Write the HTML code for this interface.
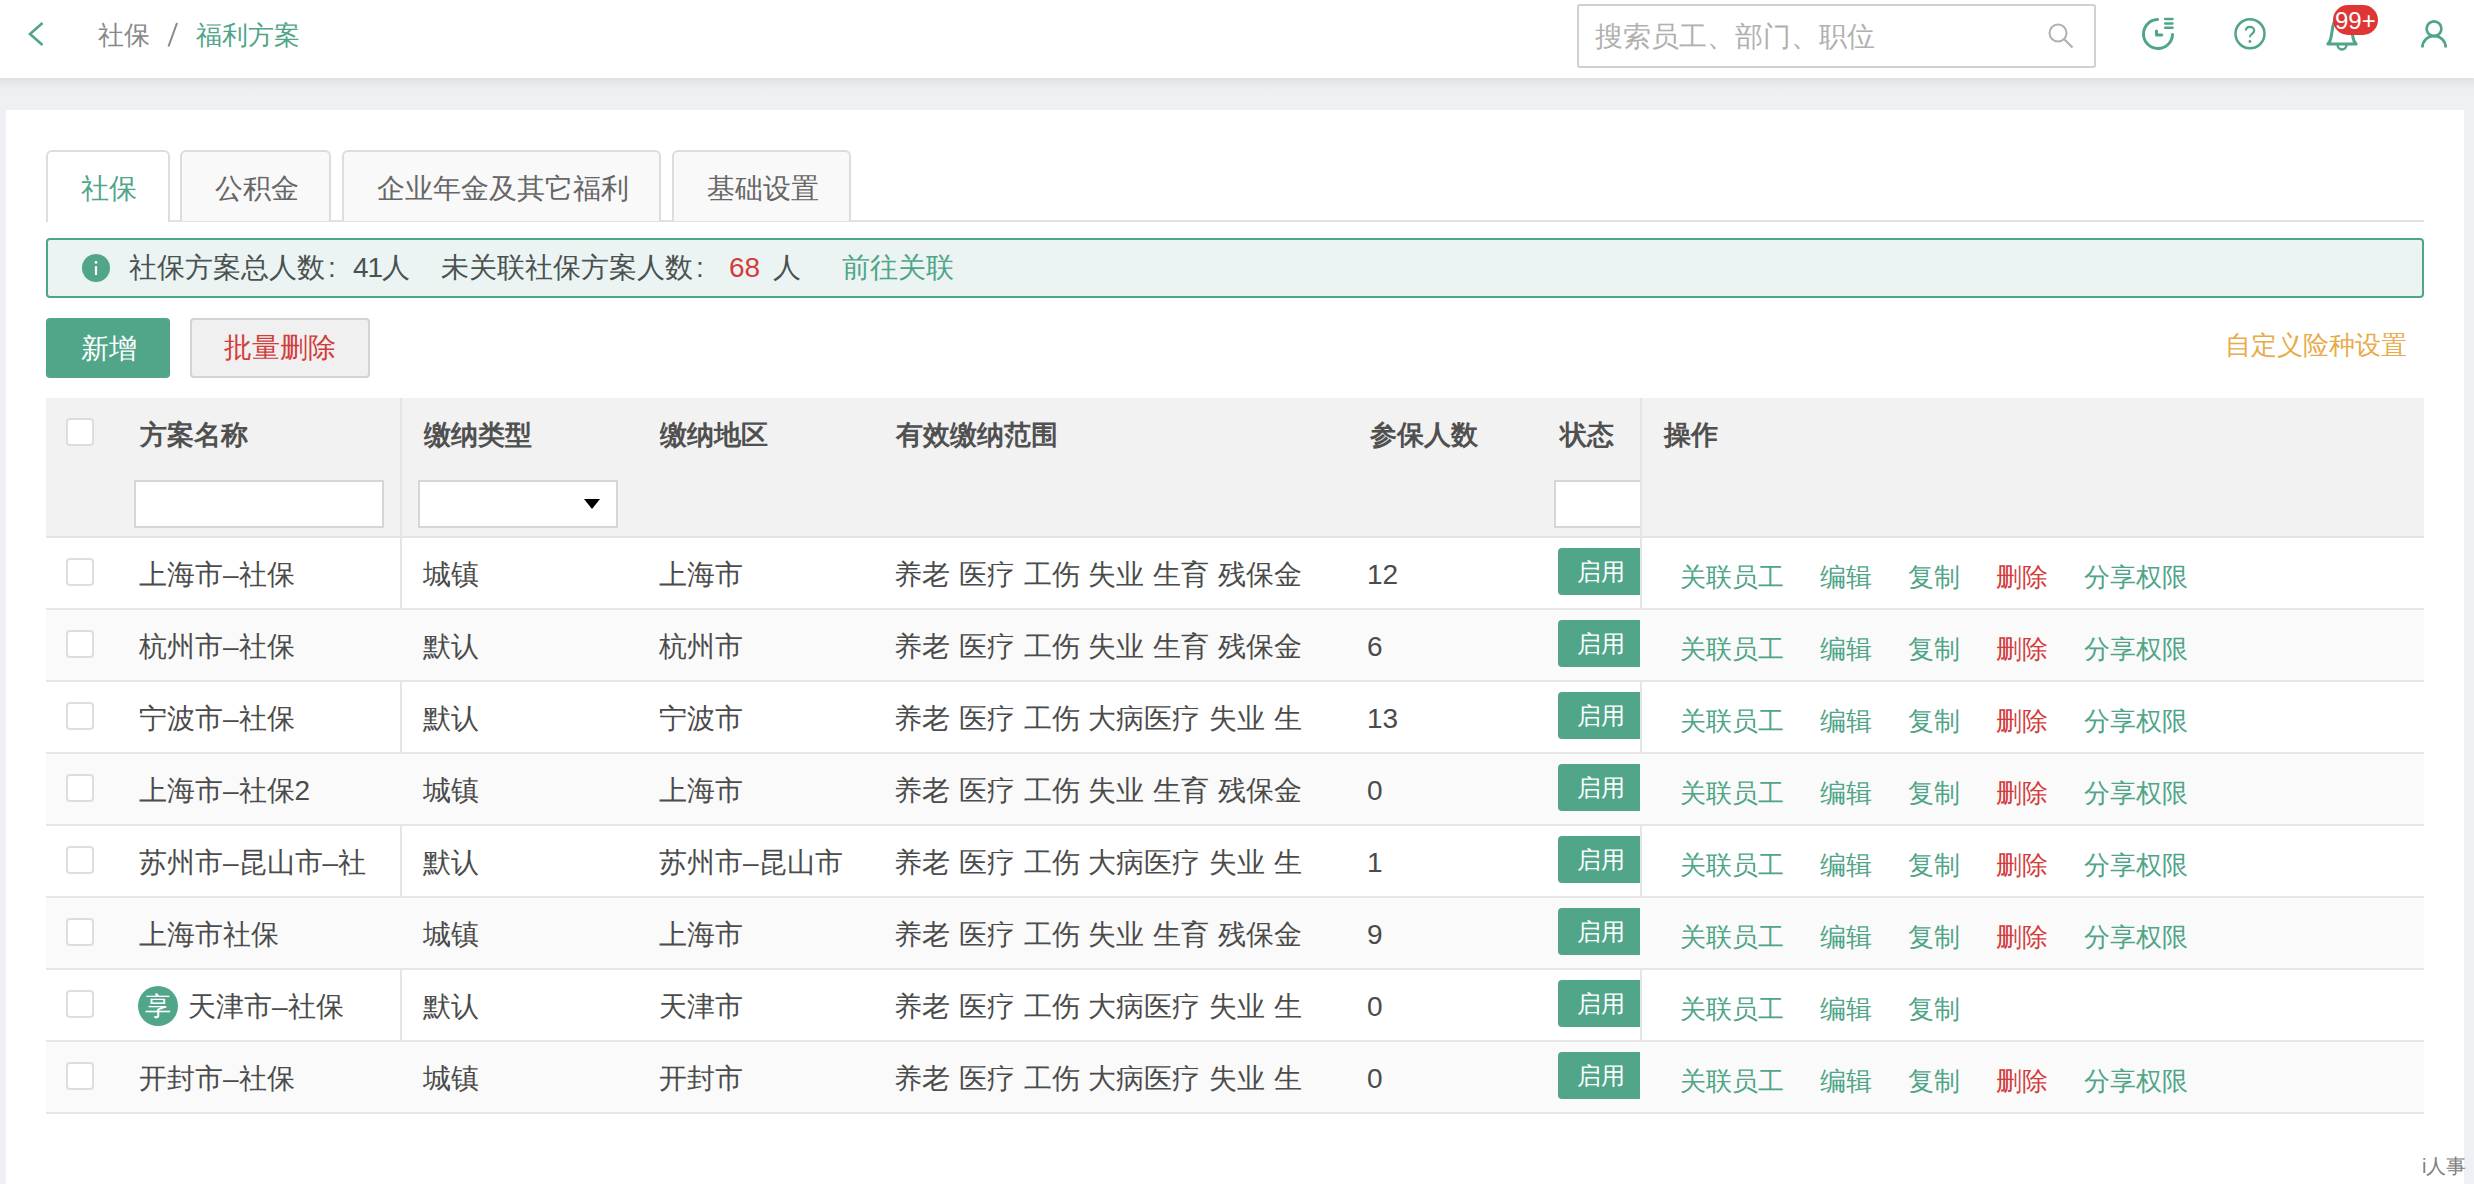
<!DOCTYPE html>
<html><head><meta charset="utf-8">
<style>
*{box-sizing:border-box;margin:0;padding:0}
html,body{width:2474px;height:1184px;overflow:hidden;background:#eff0f4;font-family:"Liberation Sans",sans-serif;color:#555}
.abs{position:absolute}
.t{position:absolute;white-space:nowrap;line-height:1}
#hdr{position:absolute;left:0;top:0;width:2474px;height:78px;background:#fff}
#shadow{position:absolute;left:0;top:78px;width:2474px;height:12px;background:linear-gradient(#e0e1e5,#eff0f4)}
#card{position:absolute;left:6px;top:110px;width:2458px;height:1074px;background:#fff}
.tab{position:absolute;top:150px;height:71px;border:2px solid #ddd;border-bottom:none;border-radius:6px 6px 0 0;background:#f9f9f9;color:#666;font-size:28px}
.tab.on{background:#fff;color:#4fa588;height:72px}
.cb{position:absolute;left:66px;width:28px;height:28px;border:2px solid #ddd;border-radius:4px;background:#fff}
.row{position:absolute;left:46px;width:2378px;height:72px;border-bottom:2px solid #e6e6e6}
.row.alt{background:#fafafa}
.badge{position:absolute;left:1558px;width:82px;height:47px;background:#51a68a;border-radius:4px 0 0 4px;color:#fff;font-size:24px}
.g{color:#4fa588}.r{color:#d33c3c}
.tx{font-size:28px;color:#4b4b4b}
.col{display:inline-block;width:28px;padding-left:3px}
.op{position:absolute;font-size:26px;line-height:1;white-space:nowrap}
</style></head><body>
<div id="hdr">
  <svg class="abs" style="left:20px;top:14px" width="40" height="40" viewBox="0 0 40 40"><path d="M22.5 9 L10 20 L22.5 31" fill="none" stroke="#4fa588" stroke-width="2.6" stroke-linejoin="miter"/></svg>
  <div class="t" style="left:98px;top:22px;font-size:26px;color:#888">社保</div>
  <svg class="abs" style="left:160px;top:18px" width="24" height="34" viewBox="0 0 24 34"><path d="M17 5 L8.5 28.5" stroke="#888" stroke-width="2"/></svg>
  <div class="t" style="left:196px;top:22px;font-size:26px;color:#4fa588">福利方案</div>
  <div class="abs" style="left:1577px;top:4px;width:519px;height:64px;border:2px solid #d0d0d0;border-radius:3px;background:#fff"></div>
  <div class="t" style="left:1595px;top:23px;font-size:28px;color:#b0b0b0">搜索员工、部门、职位</div>
  <svg class="abs" style="left:2040px;top:16px" width="40" height="40" viewBox="0 0 40 40"><circle cx="18" cy="17" r="8.5" fill="none" stroke="#b0b0b0" stroke-width="2"/><path d="M24 23 L32.5 31.5" stroke="#b0b0b0" stroke-width="2.2"/></svg>
  <svg class="abs" style="left:2135px;top:10px" width="50" height="50" viewBox="0 0 50 50" fill="none" stroke="#4fa588" stroke-linecap="round" stroke-linejoin="round"><path d="M22.5 9.5 A14.5 14.5 0 1 0 37.5 24.5" stroke-width="3"/><path d="M30.2 9.1 H37.5 M30.2 13.4 H37.5 M30.2 17.7 H37.5" stroke-width="2.5"/><path d="M21.5 21.1 V25.1 H26.8" stroke-width="3"/></svg>
  <svg class="abs" style="left:2225px;top:10px" width="50" height="50" viewBox="0 0 50 50" fill="none" stroke="#4fa588"><circle cx="25" cy="23.75" r="14.5" stroke-width="2.5"/><path d="M20.9 20.5 C20.9 18 22.7 16.9 25 16.9 C27.4 16.9 29.2 18.5 29.2 20.6 C29.2 22.6 27.6 23.5 26.3 24.5 C25.3 25.3 24.9 26 24.9 27.3" stroke-width="2.2"/><circle cx="24.9" cy="31.5" r="1.4" fill="#4fa588" stroke="none"/></svg>
  <svg class="abs" style="left:2315px;top:0px" width="70" height="60" viewBox="0 0 70 60" fill="none" stroke="#4fa588" stroke-width="3" stroke-linejoin="round"><path d="M12.8 44 C15 42 15.8 39.5 16.2 36.5 L17.8 26.5 C18.5 21.5 22 18.5 27 18.5 C32 18.5 35.5 21.5 36.2 26.5 L37.8 36.5 C38.2 39.5 39 42 41.2 44 Z"/><path d="M22.6 45 A4.4 4.4 0 0 0 31.4 45" stroke-width="2.5"/></svg>
  <div class="abs" style="left:2333px;top:5px;width:45px;height:30px;border-radius:15px;background:#e03535"></div>
  <div class="t" style="left:2335px;top:9px;font-size:24px;color:#fff">99+</div>
  <svg class="abs" style="left:2410px;top:10px" width="50" height="50" viewBox="0 0 50 50" fill="none" stroke="#4fa588" stroke-width="2.7"><circle cx="24" cy="18.8" r="7.4"/><path d="M12.35 37.6 A11.7 11.7 0 0 1 35.75 37.6"/></svg>
</div>
<div id="shadow"></div>
<div id="card"></div>

<!-- tabs -->
<div class="abs" style="left:46px;top:220px;width:2378px;height:2px;background:#e2e2e2"></div>
<div class="tab on" style="left:46px;width:124px"><div class="t" style="left:33px;top:23px">社保</div></div>
<div class="tab" style="left:180px;width:151px"><div class="t" style="left:33px;top:23px">公积金</div></div>
<div class="tab" style="left:342px;width:319px"><div class="t" style="left:33px;top:23px">企业年金及其它福利</div></div>
<div class="tab" style="left:672px;width:179px"><div class="t" style="left:33px;top:23px">基础设置</div></div>

<!-- info bar -->
<div class="abs" style="left:46px;top:238px;width:2378px;height:60px;border:2px solid #4fa588;border-radius:4px;background:#ebf4f2"></div>
<svg class="abs" style="left:82px;top:254px" width="28" height="28" viewBox="0 0 28 28"><circle cx="14" cy="14" r="14" fill="#51a68a"/><circle cx="14" cy="8.4" r="1.4" fill="#fff"/><rect x="12.9" y="12.2" width="2.2" height="8.8" fill="#fff"/></svg>
<div class="t" style="left:129px;top:254px;font-size:28px;color:#4a5151">社保方案总人数<span class="col">:</span><span style="letter-spacing:-1px">41</span>人</div>
<div class="t" style="left:441px;top:254px;font-size:28px;color:#4a5151">未关联社保方案人数<span class="col">:</span></div>
<div class="t" style="left:729px;top:254px;font-size:28px;color:#d33c3c">68</div>
<div class="t" style="left:773px;top:254px;font-size:28px;color:#4a5151">人</div>
<div class="t" style="left:842px;top:254px;font-size:28px;color:#4fa588">前往关联</div>

<!-- buttons -->
<div class="abs" style="left:46px;top:318px;width:124px;height:60px;background:#51a68a;border-radius:4px"></div>
<div class="t" style="left:81px;top:335px;font-size:28px;color:#fff">新增</div>
<div class="abs" style="left:190px;top:318px;width:180px;height:60px;background:#f0f0f0;border:2px solid #d4d4d4;border-radius:4px"></div>
<div class="t" style="left:224px;top:334px;font-size:28px;color:#d33c3c">批量删除</div>
<div class="t" style="left:2225px;top:332px;font-size:26px;color:#e8ab4a">自定义险种设置</div>

<!-- table header -->
<div class="abs" style="left:46px;top:398px;width:2378px;height:140px;background:#f2f2f2;border-bottom:2px solid #e4e4e4"></div>
<div class="abs" style="left:400px;top:398px;width:2px;height:716px;background:#e4e4e4"></div>
<div class="abs" style="left:1640px;top:398px;width:2px;height:716px;background:#e4e4e4"></div>
<div class="cb" style="top:418px"></div>
<div class="t" style="left:140px;top:422px;font-size:27px;font-weight:600;color:#505050">方案名称</div>
<div class="t" style="left:424px;top:422px;font-size:27px;font-weight:600;color:#505050">缴纳类型</div>
<div class="t" style="left:660px;top:422px;font-size:27px;font-weight:600;color:#505050">缴纳地区</div>
<div class="t" style="left:896px;top:422px;font-size:27px;font-weight:600;color:#505050">有效缴纳范围</div>
<div class="t" style="left:1370px;top:422px;font-size:27px;font-weight:600;color:#505050">参保人数</div>
<div class="t" style="left:1560px;top:422px;font-size:27px;font-weight:600;color:#505050">状态</div>
<div class="t" style="left:1664px;top:422px;font-size:27px;font-weight:600;color:#505050">操作</div>
<div class="abs" style="left:134px;top:480px;width:250px;height:48px;background:#fff;border:2px solid #d6d6d6"></div>
<div class="abs" style="left:418px;top:480px;width:200px;height:48px;background:#fff;border:2px solid #d6d6d6"></div>
<svg class="abs" style="left:582px;top:497px" width="20" height="14" viewBox="0 0 20 14"><path d="M2 2 L18 2 L10 12 Z" fill="#000"/></svg>
<div class="abs" style="left:1554px;top:480px;width:86px;height:48px;background:#fff;border:2px solid #d6d6d6;border-right:none"></div>

<div id="rows"><div class="row" style="top:538px"></div>
<div class="cb" style="top:558px"></div>
<div class="t tx" style="left:139px;top:561px">上海市–社保</div>
<div class="t tx" style="left:423px;top:561px">城镇</div>
<div class="t tx" style="left:659px;top:561px">上海市</div>
<div class="t tx" style="left:894px;top:561px;word-spacing:1px">养老 医疗 工伤 失业 生育 残保金</div>
<div class="t tx" style="left:1367px;top:561px">12</div>
<div class="badge" style="top:548px"><div class="t" style="left:19px;top:12px">启用</div></div>
<div class="op g" style="left:1680px;top:564px">关联员工</div>
<div class="op g" style="left:1820px;top:564px">编辑</div>
<div class="op g" style="left:1908px;top:564px">复制</div>
<div class="op r" style="left:1996px;top:564px">删除</div>
<div class="op g" style="left:2084px;top:564px">分享权限</div>
<div class="row alt" style="top:610px"></div>
<div class="cb" style="top:630px"></div>
<div class="t tx" style="left:139px;top:633px">杭州市–社保</div>
<div class="t tx" style="left:423px;top:633px">默认</div>
<div class="t tx" style="left:659px;top:633px">杭州市</div>
<div class="t tx" style="left:894px;top:633px;word-spacing:1px">养老 医疗 工伤 失业 生育 残保金</div>
<div class="t tx" style="left:1367px;top:633px">6</div>
<div class="badge" style="top:620px"><div class="t" style="left:19px;top:12px">启用</div></div>
<div class="op g" style="left:1680px;top:636px">关联员工</div>
<div class="op g" style="left:1820px;top:636px">编辑</div>
<div class="op g" style="left:1908px;top:636px">复制</div>
<div class="op r" style="left:1996px;top:636px">删除</div>
<div class="op g" style="left:2084px;top:636px">分享权限</div>
<div class="row" style="top:682px"></div>
<div class="cb" style="top:702px"></div>
<div class="t tx" style="left:139px;top:705px">宁波市–社保</div>
<div class="t tx" style="left:423px;top:705px">默认</div>
<div class="t tx" style="left:659px;top:705px">宁波市</div>
<div class="t tx" style="left:894px;top:705px;word-spacing:1px">养老 医疗 工伤 大病医疗 失业 生</div>
<div class="t tx" style="left:1367px;top:705px">13</div>
<div class="badge" style="top:692px"><div class="t" style="left:19px;top:12px">启用</div></div>
<div class="op g" style="left:1680px;top:708px">关联员工</div>
<div class="op g" style="left:1820px;top:708px">编辑</div>
<div class="op g" style="left:1908px;top:708px">复制</div>
<div class="op r" style="left:1996px;top:708px">删除</div>
<div class="op g" style="left:2084px;top:708px">分享权限</div>
<div class="row alt" style="top:754px"></div>
<div class="cb" style="top:774px"></div>
<div class="t tx" style="left:139px;top:777px">上海市–社保2</div>
<div class="t tx" style="left:423px;top:777px">城镇</div>
<div class="t tx" style="left:659px;top:777px">上海市</div>
<div class="t tx" style="left:894px;top:777px;word-spacing:1px">养老 医疗 工伤 失业 生育 残保金</div>
<div class="t tx" style="left:1367px;top:777px">0</div>
<div class="badge" style="top:764px"><div class="t" style="left:19px;top:12px">启用</div></div>
<div class="op g" style="left:1680px;top:780px">关联员工</div>
<div class="op g" style="left:1820px;top:780px">编辑</div>
<div class="op g" style="left:1908px;top:780px">复制</div>
<div class="op r" style="left:1996px;top:780px">删除</div>
<div class="op g" style="left:2084px;top:780px">分享权限</div>
<div class="row" style="top:826px"></div>
<div class="cb" style="top:846px"></div>
<div class="t tx" style="left:139px;top:849px">苏州市–昆山市–社</div>
<div class="t tx" style="left:423px;top:849px">默认</div>
<div class="t tx" style="left:659px;top:849px">苏州市–昆山市</div>
<div class="t tx" style="left:894px;top:849px;word-spacing:1px">养老 医疗 工伤 大病医疗 失业 生</div>
<div class="t tx" style="left:1367px;top:849px">1</div>
<div class="badge" style="top:836px"><div class="t" style="left:19px;top:12px">启用</div></div>
<div class="op g" style="left:1680px;top:852px">关联员工</div>
<div class="op g" style="left:1820px;top:852px">编辑</div>
<div class="op g" style="left:1908px;top:852px">复制</div>
<div class="op r" style="left:1996px;top:852px">删除</div>
<div class="op g" style="left:2084px;top:852px">分享权限</div>
<div class="row alt" style="top:898px"></div>
<div class="cb" style="top:918px"></div>
<div class="t tx" style="left:139px;top:921px">上海市社保</div>
<div class="t tx" style="left:423px;top:921px">城镇</div>
<div class="t tx" style="left:659px;top:921px">上海市</div>
<div class="t tx" style="left:894px;top:921px;word-spacing:1px">养老 医疗 工伤 失业 生育 残保金</div>
<div class="t tx" style="left:1367px;top:921px">9</div>
<div class="badge" style="top:908px"><div class="t" style="left:19px;top:12px">启用</div></div>
<div class="op g" style="left:1680px;top:924px">关联员工</div>
<div class="op g" style="left:1820px;top:924px">编辑</div>
<div class="op g" style="left:1908px;top:924px">复制</div>
<div class="op r" style="left:1996px;top:924px">删除</div>
<div class="op g" style="left:2084px;top:924px">分享权限</div>
<div class="row" style="top:970px"></div>
<div class="cb" style="top:990px"></div>
<div class="abs" style="left:138px;top:986px;width:40px;height:40px;border-radius:50%;background:#51a68a"></div>
<div class="t" style="left:145px;top:993px;font-size:26px;color:#fff">享</div>
<div class="t tx" style="left:188px;top:993px">天津市–社保</div>
<div class="t tx" style="left:423px;top:993px">默认</div>
<div class="t tx" style="left:659px;top:993px">天津市</div>
<div class="t tx" style="left:894px;top:993px;word-spacing:1px">养老 医疗 工伤 大病医疗 失业 生</div>
<div class="t tx" style="left:1367px;top:993px">0</div>
<div class="badge" style="top:980px"><div class="t" style="left:19px;top:12px">启用</div></div>
<div class="op g" style="left:1680px;top:996px">关联员工</div>
<div class="op g" style="left:1820px;top:996px">编辑</div>
<div class="op g" style="left:1908px;top:996px">复制</div>
<div class="row alt" style="top:1042px"></div>
<div class="cb" style="top:1062px"></div>
<div class="t tx" style="left:139px;top:1065px">开封市–社保</div>
<div class="t tx" style="left:423px;top:1065px">城镇</div>
<div class="t tx" style="left:659px;top:1065px">开封市</div>
<div class="t tx" style="left:894px;top:1065px;word-spacing:1px">养老 医疗 工伤 大病医疗 失业 生</div>
<div class="t tx" style="left:1367px;top:1065px">0</div>
<div class="badge" style="top:1052px"><div class="t" style="left:19px;top:12px">启用</div></div>
<div class="op g" style="left:1680px;top:1068px">关联员工</div>
<div class="op g" style="left:1820px;top:1068px">编辑</div>
<div class="op g" style="left:1908px;top:1068px">复制</div>
<div class="op r" style="left:1996px;top:1068px">删除</div>
<div class="op g" style="left:2084px;top:1068px">分享权限</div></div><!--/rows-->
<div class="abs" style="left:2464px;top:110px;width:10px;height:1074px;background:#eff0f4"></div>
<div class="t" style="left:2422px;top:1156px;font-size:20px;color:#808080">i人事</div>
</body></html>
